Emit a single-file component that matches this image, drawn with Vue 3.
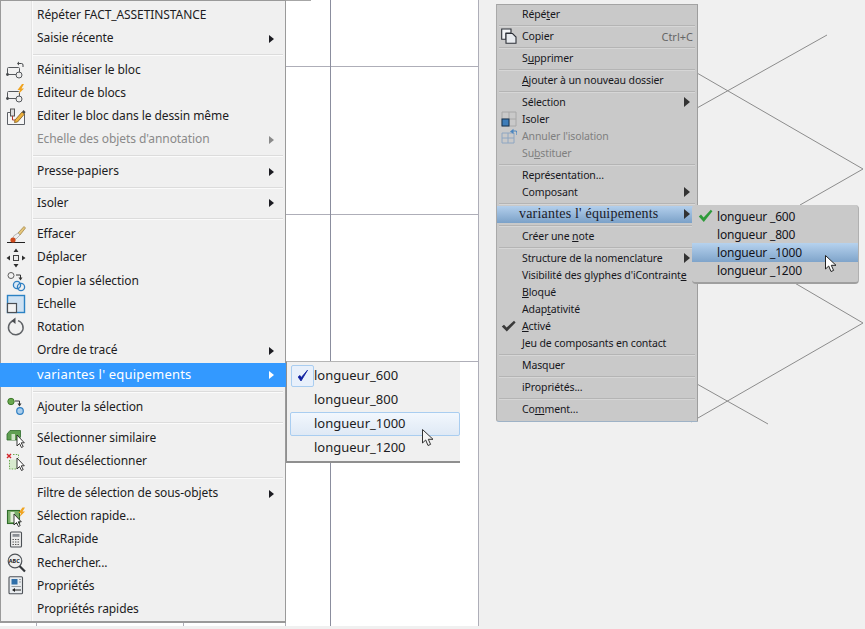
<script setup>
const leftMenu = [
  [{ t: 'Répéter FACT_ASSETINSTANCE' }, { t: 'Saisie récente', sub: true }],
  [
    { t: 'Réinitialiser le bloc', icon: 'reset' },
    { t: 'Editeur de blocs', icon: 'blockedit' },
    { t: 'Editer le bloc dans le dessin même', icon: 'inplace' },
    { t: "Echelle des objets d'annotation", sub: true, off: true },
  ],
  [{ t: 'Presse-papiers', sub: true }],
  [{ t: 'Isoler', sub: true }],
  [
    { t: 'Effacer', icon: 'erase' },
    { t: 'Déplacer', icon: 'move' },
    { t: 'Copier la sélection', icon: 'copy' },
    { t: 'Echelle', icon: 'scale' },
    { t: 'Rotation', icon: 'rotate' },
    { t: 'Ordre de tracé', sub: true },
    { t: "variantes l' equipements", sub: true, active: true },
  ],
  [{ t: 'Ajouter la sélection', icon: 'add' }],
  [
    { t: 'Sélectionner similaire', icon: 'similar' },
    { t: 'Tout désélectionner', icon: 'deselect' },
  ],
  [
    { t: 'Filtre de sélection de sous-objets', sub: true },
    { t: 'Sélection rapide...', icon: 'quick' },
    { t: 'CalcRapide', icon: 'calc' },
    { t: 'Rechercher...', icon: 'find' },
    { t: 'Propriétés', icon: 'props' },
    { t: 'Propriétés rapides' },
  ],
]

const leftSub = [
  { t: 'longueur_600', checked: true },
  { t: 'longueur_800' },
  { t: 'longueur_1000', hover: true },
  { t: 'longueur_1200' },
]

const rightMenu = [
  [{ pre: 'Répé', u: 't', post: 'er' }],
  [{ pre: 'Copier', icon: 'rcopy', key: 'Ctrl+C' }],
  [{ pre: 'S', u: 'u', post: 'pprimer' }],
  [{ u: 'A', post: 'jouter à un nouveau dossier' }],
  [
    { pre: 'Sélection', sub: true },
    { pre: 'Isoler', icon: 'isolate' },
    { pre: "Annuler l'isolation", icon: 'unisolate', off: true },
    { pre: 'Su', u: 'b', post: 'stituer', off: true },
  ],
  [
    { pre: 'Représentation...' },
    { pre: 'Composant', sub: true },
  ],
  [{ pre: "variantes l' équipements", sub: true, active: true }],
  [{ pre: 'Créer une ', u: 'n', post: 'ote' }],
  [
    { pre: 'Structure de la nomenclature', sub: true },
    { pre: "Visibilité des glyphes d'iContraint", u: 'e' },
    { u: 'B', post: 'loqué' },
    { pre: 'Adap', u: 't', post: 'ativité' },
    { u: 'A', post: 'ctivé', icon: 'tick' },
    { u: 'J', post: 'eu de composants en contact' },
  ],
  [{ pre: 'Masquer' }],
  [{ pre: 'iPropriétés...' }],
  [{ pre: 'Co', u: 'm', post: 'ment...' }],
]

const rightSub = [
  { t: 'longueur _600', checked: true },
  { t: 'longueur _800' },
  { t: 'longueur _1000', hover: true },
  { t: 'longueur _1200' },
]
</script>

<template>
  <div class="page">
    <svg class="canvas" width="865" height="629" viewBox="0 0 865 629">
      <rect x="0" y="0" width="479" height="626" fill="#fff" />
      <g stroke="#aeaeb8" fill="none" shape-rendering="crispEdges">
        <path d="M285.5 0V626" />
        <path d="M286 66.5H478M286 214.5H478M286 361.5H478" />
        <path d="M478.5 0V626" />
        <path d="M36.5 622V626M183.5 622V626" />
      </g>
      <path d="M330.5 0V626" stroke="#8b8e9e" fill="none" shape-rendering="crispEdges" />
      <path d="M286 0.5H311" stroke="#a6a6a6" fill="none" shape-rendering="crispEdges" />
      <g stroke="#8c8c8c" fill="none">
        <path d="M697 73L863 169L800 205" />
        <path d="M697 108L827 35" />
        <path d="M793 282L863 323L691 422" />
        <path d="M697 384L768 424" />
      </g>
    </svg>

    <!-- left context menu -->
    <div class="lmenu">
      <div v-for="(group, gi) in leftMenu" :key="gi" class="lgroup">
        <div v-if="gi" class="lsep"></div>
        <div
          v-for="item in group"
          :key="item.t"
          class="lrow"
          :class="{ off: item.off, active: item.active }"
        >
          <span class="lgut">
            <svg v-if="item.icon" class="ic" viewBox="0 0 20 20" width="20" height="20" fill="none">
              <template v-if="item.icon === 'reset'">
                <rect x="1.5" y="7.5" width="12" height="7" rx="1" stroke="#55585c" />
                <circle cx="1.5" cy="14.5" r="1.4" fill="#44474a" />
                <circle cx="13" cy="15" r="3" fill="#eee" stroke="#55585c" />
                <path d="M12 3.5H15.5Q17 3.5 17 5V7" stroke="#44474a" />
                <path d="M13 1.5L11 3.5L13 5.5Z" fill="#44474a" />
              </template>
              <template v-else-if="item.icon === 'blockedit'">
                <rect x="1.5" y="7.5" width="12" height="7" rx="1" stroke="#55585c" />
                <circle cx="1.5" cy="14.5" r="1.4" fill="#44474a" />
                <circle cx="13" cy="15" r="3" fill="#eee" stroke="#55585c" />
                <path d="M16 0L11.5 6H14L12.5 10L18 4.5H15.5L18 0Z" fill="#f0a420" />
              </template>
              <template v-else-if="item.icon === 'inplace'">
                <path d="M4 5.5H1.5V17.5H18.5V7" stroke="#5c6066" fill="#f6f6f6" />
                <rect x="4.5" y="2" width="4" height="7" stroke="#555" fill="#ddd" />
                <path d="M6.5 9V13H9" stroke="#b03a2e" />
                <path d="M9 13L16 5L18.5 7L11.5 15L8.5 15.5Z" fill="#eeb23c" stroke="#7d5a1e" stroke-width=".8" />
                <path d="M16 5L17.5 3L19.5 5L18.5 7Z" fill="#444" />
              </template>
              <template v-else-if="item.icon === 'erase'">
                <path d="M1 17.5H19" stroke="#222" />
                <path d="M12 8L18 1.5L19.5 3L14 10Z" fill="#e6c67a" stroke="#9a7d3c" stroke-width=".7" />
                <path d="M12 8L14 10L10 14H6.5Q6.5 10.5 12 8Z" fill="#eee" stroke="#9d9d9d" stroke-width=".7" />
                <circle cx="7" cy="15" r="2.6" fill="#cf4a1c" />
              </template>
              <template v-else-if="item.icon === 'move'">
                <rect x="7.5" y="7.5" width="5" height="5" stroke="#444" fill="#eee" />
                <path d="M10 0.5L7.5 4H12.5ZM10 19.5L7.5 16H12.5ZM0.5 10L4 7.5V12.5ZM19.5 10L16 7.5V12.5Z" fill="#2e2e2e" />
              </template>
              <template v-else-if="item.icon === 'copy'">
                <circle cx="5" cy="4.5" r="3" fill="#f2f2f2" stroke="#5c5c5c" />
                <path d="M10 4H14.5V7" stroke="#333" />
                <path d="M12.5 6.5H16.5L14.5 9.5Z" fill="#333" />
                <circle cx="11" cy="14" r="3.6" fill="#dbe9f6" stroke="#2f7fc2" stroke-width="1.3" />
                <circle cx="15" cy="16" r="3.6" fill="none" stroke="#2f7fc2" stroke-width="1.3" />
              </template>
              <template v-else-if="item.icon === 'scale'">
                <rect x="1.5" y="1.5" width="17" height="17" stroke="#2b82c4" stroke-width="1.4" fill="#cfe2f3" />
                <rect x="1.5" y="9.5" width="9" height="9" stroke="#4b4f55" stroke-width="1.2" fill="#f2f2f2" />
              </template>
              <template v-else-if="item.icon === 'rotate'">
                <path d="M7 3.8A7.3 7.3 0 1 0 12 3.6" stroke="#5f6266" stroke-width="1.5" />
                <path d="M9.5 0.5L5.5 3.8L9.5 7Z" fill="#4a4d50" />
              </template>
              <template v-else-if="item.icon === 'add'">
                <circle cx="5" cy="4.5" r="3.2" fill="#6aa84f" stroke="#3e7a2c" />
                <path d="M9 4H13.5V7" stroke="#333" />
                <path d="M11.5 6.5H15.5L13.5 9.5Z" fill="#333" />
                <circle cx="14" cy="14" r="3.3" fill="#a9cdec" stroke="#2f7fc2" stroke-width="1.2" />
              </template>
              <template v-else-if="item.icon === 'similar'">
                <path d="M1 5L4 1.5H14.5V8L12 11H1Z" fill="#5f9f52" stroke="#2d6a2a" stroke-width=".8" />
                <rect x="5.5" y="5" width="3.5" height="6" fill="#cfe3c8" />
                <path d="M11 6V17L13.5 14.5L15.5 18.5L17.2 17.6L15.2 13.8H18.3Z" fill="#fff" stroke="#222" stroke-width=".9" />
              </template>
              <template v-else-if="item.icon === 'deselect'">
                <path d="M1 2L5 6M5 2L1 6" stroke="#d3252a" stroke-width="1.4" />
                <rect x="3.5" y="7.5" width="9" height="9.5" fill="#d8ebcf" />
                <path d="M7 2.5H12.5V6" stroke="#6aa84f" stroke-dasharray="1.5 1.3" />
                <path d="M3.5 8V17H11" stroke="#6aa84f" stroke-dasharray="1.5 1.3" />
                <path d="M11 6V17L13.5 14.5L15.5 18.5L17.2 17.6L15.2 13.8H18.3Z" fill="#fff" stroke="#222" stroke-width=".9" />
              </template>
              <template v-else-if="item.icon === 'quick'">
                <rect x="1.5" y="3.5" width="12" height="13" fill="#7bb06a" stroke="#2f6c2a" stroke-width="1.1" />
                <rect x="4.5" y="5" width="4" height="10" fill="#e1eed9" />
                <path d="M8 7V18L10.5 15.5L12.5 19.5L14.2 18.6L12.2 14.8H15.3Z" fill="#fff" stroke="#222" stroke-width=".9" />
                <path d="M16.5 0.5L12.5 6H15L13.5 10L19 4.5H16.5L19 0.5Z" fill="#f0a420" />
              </template>
              <template v-else-if="item.icon === 'calc'">
                <rect x="4.5" y="2" width="11" height="15" rx="1" fill="#ececec" stroke="#4d5156" stroke-width="1.1" />
                <rect x="6.5" y="4" width="7" height="2.8" fill="#8b8f95" />
                <path d="M6.5 9.5H13.5M6.5 12H13.5M6.5 14.5H13.5" stroke="#555" stroke-dasharray="1.4 1.1" />
              </template>
              <template v-else-if="item.icon === 'find'">
                <circle cx="9" cy="8" r="6.8" fill="#eee" stroke="#4f5358" stroke-width="1.2" />
                <text x="2.8" y="10.4" class="abc">ABC</text>
                <path d="M13.5 13L19 18.5" stroke="#33363a" stroke-width="2.2" />
              </template>
              <template v-else-if="item.icon === 'props'">
                <rect x="3" y="0.8" width="13.5" height="17" rx="1" fill="#e9ecef" stroke="#4e5258" stroke-width="1.1" />
                <rect x="5.5" y="3" width="6" height="5.5" fill="#2f6fa9" />
                <path d="M13 3.5H15M13 6H15M5.5 10.5H15" stroke="#9a9da1" />
                <path d="M15 14H8" stroke="#222" />
                <path d="M9 12L6 14L9 16Z" fill="#222" />
              </template>
            </svg>
          </span>
          <span class="llabel">{{ item.t }}</span>
          <span v-if="item.sub" class="larrow"></span>
        </div>
      </div>
    </div>

    <!-- left submenu -->
    <div class="lsub">
      <div v-for="item in leftSub" :key="item.t" class="lsubrow" :class="{ hover: item.hover }">
        <span class="lcheck" :class="{ on: item.checked }">
          <svg v-if="item.checked" viewBox="0 0 12 14" width="12" height="14" fill="none">
            <path d="M1.2 8L4 12L10.5 1.2L4.2 8.6L2.8 6.4Z" fill="#0f1fa0" stroke="#0f1fa0" stroke-width=".8" />
          </svg>
        </span>
        <span class="lsublabel">{{ item.t }}</span>
      </div>
      <svg class="cursor c1" viewBox="0 0 13 18" width="13" height="18">
        <path d="M0.5 0.5V14L3.7 11L6 16.5L8.6 15.4L6.3 10.3H11Z" fill="#f4f4f4" stroke="#333" />
      </svg>
    </div>

    <!-- right context menu -->
    <div class="rmenu">
      <div v-for="(group, gi) in rightMenu" :key="gi">
        <div v-if="gi" class="rsep"></div>
        <div
          v-for="(item, ii) in group"
          :key="ii"
          class="rrow"
          :class="{ off: item.off, active: item.active }"
        >
          <span class="rgut">
            <svg v-if="item.icon" viewBox="0 0 16 16" width="16" height="16" fill="none">
              <template v-if="item.icon === 'rcopy'">
                <path d="M0.7 1V11.3H5V5H10V1Z" fill="#f2f4f7" stroke="#2c3038" stroke-width="1.1" />
                <path d="M5 5.5H11.5L15 9V15.3H5Z" fill="#e7eaee" stroke="#2c3038" stroke-width="1.1" />
              </template>
              <template v-else-if="item.icon === 'isolate'">
                <path d="M1 1H15V15H1ZM8 1V15M1 8H15" stroke="#a8a8a8" />
                <rect x="1" y="8" width="7" height="7" fill="#3d7cb8" stroke="#17324f" />
              </template>
              <template v-else-if="item.icon === 'unisolate'">
                <path d="M1 5H13V15H1ZM7 5V15M1 10H13" stroke="#8ea6c2" />
                <path d="M9 3.5L12.5 0.8V6Z" fill="#4b86c0" />
                <path d="M12 3H14.5Q16 3 16 5V7" stroke="#4b86c0" stroke-width="1.2" />
              </template>
              <template v-else-if="item.icon === 'tick'">
                <path d="M0.8 8.5L3 6.8L5.6 9.6L13 2.8L14.6 4.4L5.8 13.4Z" fill="#3a3a3a" />
              </template>
            </svg>
          </span>
          <span class="rlabel">{{ item.pre }}<u v-if="item.u">{{ item.u }}</u>{{ item.post }}</span>
          <span v-if="item.key" class="rkey">{{ item.key }}</span>
          <span v-if="item.sub" class="rarrow"></span>
        </div>
      </div>
    </div>

    <!-- right submenu -->
    <div class="rsub">
      <div v-for="item in rightSub" :key="item.t" class="rsubrow" :class="{ hover: item.hover }">
        <span class="rcheck">
          <svg v-if="item.checked" viewBox="0 0 15 14" width="15" height="14" fill="none">
            <path d="M0.8 7.5L3 5.6L5.6 8.4L12.8 0.8L14.4 2.2L5.8 13Z" fill="#2e9b3a" />
          </svg>
        </span>
        <span class="rsublabel">{{ item.t }}</span>
      </div>
      <svg class="cursor c2" viewBox="0 0 13 18" width="13" height="18">
        <path d="M0.5 0.5V14L3.7 11L6 16.5L8.6 15.4L6.3 10.3H11Z" fill="#fff" stroke="#222" />
      </svg>
    </div>
  </div>
</template>

<style scoped>
.page {
  position: relative;
  width: 865px;
  height: 629px;
  overflow: hidden;
  background: #f0f0f0;
  font-family: "Noto Sans", "Liberation Sans", sans-serif;
  color: #1c1c22;
}
.canvas {
  position: absolute;
  left: 0;
  top: 0;
}

/* left menu */
.lmenu {
  position: absolute;
  left: 0;
  top: 0;
  width: 286px;
  height: 623px;
  box-sizing: border-box;
  padding-top: 3px;
  border: 1px solid #9a9a9a;
  border-width: 1px 1px 2px 1px;
  background: linear-gradient(90deg, #f1f1f1 0 30px, #e4e4e4 30px 31px, #fafafa 31px 32px, #f0f0f0 32px);
  font-size: 12px;
}
.lsep {
  height: 8.4px;
  margin-left: 32px;
  margin-right: 2px;
  display: flex;
  align-items: center;
}
.lsep::before {
  content: "";
  flex: 1;
  height: 1px;
  background: #dcdcdc;
  box-shadow: 0 1px 0 #fbfbfb;
}
.lrow {
  display: flex;
  align-items: center;
  height: 23.2px;
  position: relative;
}
.lrow.off {
  color: #8a8a8a;
}
.lrow.active {
  margin-left: -1px;
  margin-right: -1px;
  height: 24px;
  margin-top: 1px;
  background: #3399ff;
  color: #fff;
  font-size: 13px;
  letter-spacing: 0.3px;
}
.lgut {
  width: 36px;
  flex: none;
  display: flex;
  align-items: center;
  padding-left: 5px;
  box-sizing: border-box;
}
.lrow.active .lgut {
  width: 37px;
}
.ic {
  display: block;
  overflow: visible;
}
.abc {
  font-size: 5.5px;
  font-weight: 700;
  fill: #222;
}
.llabel {
  flex: 1;
  white-space: nowrap;
  margin-bottom: 2px;
  letter-spacing: -0.08px;
}
.lrow.active .llabel {
  letter-spacing: 0.2px;
}
.larrow {
  position: absolute;
  right: 11px;
  top: 50%;
  margin-top: -4px;
  border-left: 5px solid currentColor;
  border-top: 4px solid transparent;
  border-bottom: 4px solid transparent;
}
.lrow.active .larrow {
  right: 12px;
}

/* left submenu */
.lsub {
  position: absolute;
  left: 286px;
  top: 361px;
  width: 174px;
  height: 102px;
  box-sizing: border-box;
  padding: 2px 0 0 3px;
  border-left: 1px solid #8f8f8f;
  border-top: 1px solid #b5b5b5;
  border-bottom: 2px solid #8f8f8f;
  background: #f0f0f0;
  font-size: 13px;
}
.lsubrow {
  display: flex;
  align-items: center;
  height: 24px;
  border: 1px solid transparent;
  box-sizing: border-box;
  border-radius: 2px;
}
.lsubrow.hover {
  border-color: #a9cdf0;
  background: linear-gradient(#f2f7fd, #dfe9f5);
}
.lcheck {
  width: 23px;
  height: 22px;
  flex: none;
  box-sizing: border-box;
  display: flex;
  align-items: center;
  justify-content: center;
  border-radius: 2px;
  border: 1px solid transparent;
}
.lcheck.on {
  border-color: #a9cdf0;
  background: #e8f0fb;
}
.lsublabel {
  white-space: nowrap;
  margin-bottom: 2px;
}
.cursor {
  position: absolute;
  display: block;
}
.c1 {
  left: 135px;
  top: 67px;
}

/* right menu */
.rmenu {
  position: absolute;
  left: 496px;
  top: 4px;
  width: 202px;
  height: 418px;
  box-sizing: border-box;
  padding-top: 0.5px;
  background: #c9c9c9;
  border-top: 1px solid #a4a4a4;
  border-right: 1px solid #9d9d9d;
  border-left: 1px solid #a9a9a9;
  border-bottom: 1px solid #9eb2c6;
  border-radius: 0 0 0 3px;
  font-size: 10.5px;
  letter-spacing: -0.12px;
  color: #17171c;
}
.rsep {
  height: 5px;
  display: flex;
  align-items: center;
  padding: 0 2px;
}
.rsep::before {
  content: "";
  flex: 1;
  height: 1px;
  background: #b4b4b4;
  box-shadow: 0 1px 0 #d6d6d6;
}
.rrow {
  display: flex;
  align-items: center;
  height: 17px;
  position: relative;
  white-space: nowrap;
}
.rrow.off {
  color: #7f7f7f;
}
.rrow.active {
  background: linear-gradient(#b3cfec, #7ba1c8);
  font-family: "Liberation Serif", serif;
  font-size: 14px;
  color: #1b1b28;
  letter-spacing: 0.2px;
}
.rrow.active .rgut {
  width: 22px;
}
.rgut {
  width: 25px;
  flex: none;
  display: flex;
  align-items: center;
  padding-left: 4px;
  box-sizing: border-box;
}
.rlabel {
  flex: 1;
  margin-bottom: 1px;
}
.rkey {
  color: #666;
  margin-right: 4px;
  font-size: 11px;
  letter-spacing: 0;
}
.rarrow {
  position: absolute;
  right: 7px;
  top: 50%;
  margin-top: -5px;
  border-left: 6px solid #333;
  border-top: 5px solid transparent;
  border-bottom: 5px solid transparent;
}

/* right submenu */
.rsub {
  position: absolute;
  left: 692px;
  top: 205px;
  width: 167px;
  height: 79px;
  box-sizing: border-box;
  padding-top: 2px;
  background: #c9c9c9;
  border-radius: 4px;
  border-bottom: 2px solid #9f9f9f;
  border-right: 1px solid #b0b0b0;
  font-size: 12px;
  color: #13131a;
}
.rsubrow {
  display: flex;
  align-items: center;
  height: 18.2px;
  padding-left: 1px;
}
.rsublabel {
  letter-spacing: -0.2px;
}
.rsubrow.hover {
  background: linear-gradient(#b6d2ee, #7fa4ca);
}
.rcheck {
  width: 24px;
  flex: none;
  display: flex;
  align-items: center;
  padding-left: 5px;
  box-sizing: border-box;
}
.c2 {
  left: 133px;
  top: 50px;
}
</style>

<style>
html,
body {
  margin: 0;
  background: #f0f0f0;
}
</style>
